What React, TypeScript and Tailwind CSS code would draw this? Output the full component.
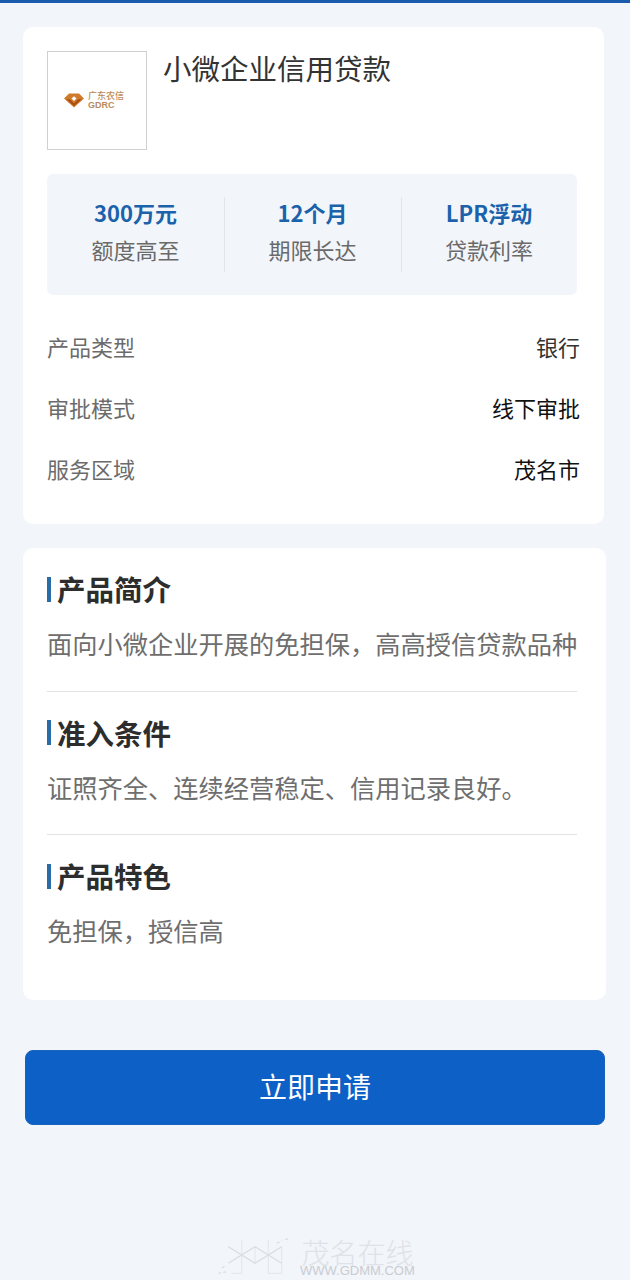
const F = { fontFamily: '"Noto Sans CJK SC", "Noto Sans", sans-serif' };

function Stat({ value, label, border, width }: { value: string; label: string; border?: boolean; width: string }) {
  return (
    <div className={"relative flex flex-col items-center " + width}>
      {border && <div className="absolute left-0 top-[-1px] h-[75px] w-[1px] bg-[#e2e6ea]" />}
      <div className="text-[22px] leading-[30px] font-bold text-[#1b62ab] mt-[-1px]">{value}</div>
      <div className="mt-[7px] text-[22px] leading-[30px] text-[#6a6a6a]">{label}</div>
    </div>
  );
}

function Row({ label, value, dark }: { label: string; value: string; dark?: boolean }) {
  return (
    <div className="flex justify-between items-center h-[61px] text-[22px]">
      <span className="text-[#6b6b6b]">{label}</span>
      <span className={dark ? "text-[#111111]" : "text-[#333333]"}>{value}</span>
    </div>
  );
}

function Section({ title, text, line }: { title: string; text: string; line?: boolean }) {
  return (
    <div className={line ? "w-[530px] h-[143.5px] pt-[21px] border-b border-[#e3e3e3]" : "w-[530px] h-[143.5px] pt-[21px]"}>
      <div className="flex items-center h-[40px]">
        <div className="w-[4px] h-[25px] bg-[#2a6ca8] mr-[6px]" />
        <div className="text-[28.5px] leading-[40px] font-bold text-[#2d2d2d]">{title}</div>
      </div>
      <div className="mt-[16px] text-[25.25px] leading-[36px] text-[#6e6e6e] whitespace-nowrap">{text}</div>
    </div>
  );
}

export default function App() {
  return (
    <div style={F} className="w-[630px] h-[1280px] overflow-hidden bg-[#f2f5f9] relative">
      <div className="h-[3px] bg-[#1a5cab]" />
      <div className="mt-[24px] ml-[23px] w-[581px] h-[497px] bg-white rounded-[10px] pt-[24px] px-[24px]">
        <div className="flex">
          <div className="w-[100px] h-[99px] border border-[#d0d0d0] flex items-center pl-[16px] gap-[4px]">
            <svg width="20" height="15" viewBox="0 0 24 17">
              <path d="M0 6 L6 0 H18 L24 6 L12 17 Z" fill="#d07a2c" />
              <path d="M9 6 L12 3.5 L15 6 L12 9 Z" fill="#fff" />
              <path d="M3 7 L12 15 L21 7 L17 7 L12 12 L7 7 Z" fill="#a84d12" />
            </svg>
            <div className="flex flex-col text-[#b98a5e] font-medium">
              <span className="text-[9px] leading-[10px]">广东农信</span>
              <span className="text-[9px] leading-[9px] font-bold" style={{ fontFamily: '"Liberation Sans", sans-serif' }}>GDRC</span>
            </div>
          </div>
          <div className="ml-[16px] text-[28.5px] leading-[38px] mt-[-2px] text-[#333333]">小微企业信用贷款</div>
        </div>
        <div className="mt-[24px] w-[530px] h-[121px] bg-[#f2f6fb] rounded-[6px] pt-[24px] flex">
          <Stat value="300万元" label="额度高至" width="w-[177px]" />
          <Stat value="12个月" label="期限长达" border width="w-[177px]" />
          <Stat value="LPR浮动" label="贷款利率" border width="w-[176px]" />
        </div>
        <div className="mt-[21px]">
          <Row label="产品类型" value="银行" />
          <Row label="审批模式" value="线下审批" dark />
          <Row label="服务区域" value="茂名市" dark />
        </div>
      </div>
      <div className="mt-[24px] ml-[23px] w-[583px] h-[452px] bg-white rounded-[10px] px-[24px]">
        <Section title="产品简介" text="面向小微企业开展的免担保，高高授信贷款品种" line />
        <Section title="准入条件" text="证照齐全、连续经营稳定、信用记录良好。" line />
        <Section title="产品特色" text="免担保，授信高" />
      </div>
      <div className="mt-[50px] ml-[25px] w-[580px] h-[75px] pb-[4px] rounded-[8px] bg-[#0c60c6] border border-[#1a62ba] flex items-center justify-center text-white text-[28px]">
        立即申请
      </div>
      <div className="absolute left-[218px] top-[1238px] flex items-start">
        <svg width="76" height="38" viewBox="0 0 76 38" fill="none" stroke="#d9dce3" strokeWidth="1.2">
          <path d="M23.7 2 V35.3 H13.7 M37 8.7 V25.3 M50.3 2 V35.3 H63.7 V8.7" stroke="#e6e8ee" />
          <path d="M10.3 8.7 L37 25.3 L63.7 8.7 M10.3 25.3 L37 8.7 L63.7 25.3" />
          <path d="M58.7 5.3 L64 3 M67 1.5 L72 0.3 M0.3 35.3 L8.7 33.7 M4 30 L8 27" strokeDasharray="3 2" />
        </svg>
        <div className="ml-[6px] flex flex-col items-center">
          <div className="text-[28px] leading-[28px] text-[#dfe2e9] font-light">茂名在线</div>
          <div className="text-[13px] leading-[10px] text-[#c8ccd4]" style={{ fontFamily: '"Liberation Sans", sans-serif' }}>WWW.GDMM.COM</div>
        </div>
      </div>
    </div>
  );
}
